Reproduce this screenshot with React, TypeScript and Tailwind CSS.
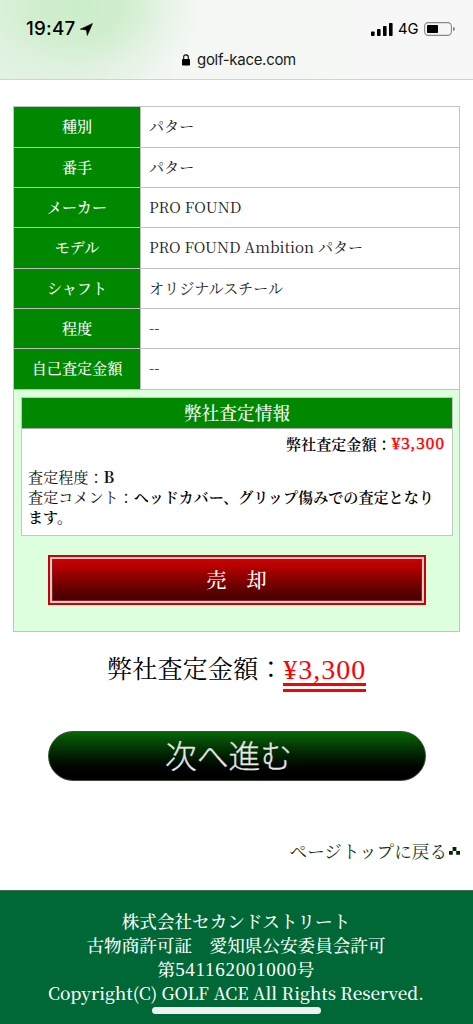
import React from "react";

const SERIF = "font-['Noto_Serif_CJK_JP','Liberation_Serif',serif]";

type Row = { label: string; value: React.ReactNode; height: string };

const rows: Row[] = [
  { label: "種別", value: "パター", height: "h-[41px]" },
  { label: "番手", value: "パター", height: "h-[40px]" },
  { label: "メーカー", value: <span className="tracking-[0.1px]">PRO FOUND</span>, height: "h-[40px]" },
  { label: "モデル", value: "PRO FOUND Ambition パター", height: "h-[41px]" },
  { label: "シャフト", value: "オリジナルスチール", height: "h-[40px]" },
  { label: "程度", value: "--", height: "h-[40px]" },
  { label: "自己査定金額", value: "--", height: "h-[41px]" },
];

function StatusBar() {
  return (
    <header className="h-[80px] shrink-0 border-b border-[#cdd3cd] bg-[radial-gradient(ellipse_125px_85px_at_78px_8px,#ccedca_0%,#d0eece_35%,#d8f0d766_72%,#d8f0d700_100%),linear-gradient(90deg,#e2f2e2_0px,#e6f2e6_90px,#f4f7f4_175px,#f7f7f7_473px)] font-['Inter','Noto_Sans',sans-serif] text-black">
      <div className="flex h-[46px] items-center pt-[12px] pl-[26px]">
        <span className="w-[50px] text-[18.8px] leading-[22px] font-medium tracking-[0.2px] whitespace-nowrap">19:47</span>
        <svg className="ml-[4px] h-[13px] w-[13px]" viewBox="0 0 13 13">
          <path d="M12.6 0.4 L7.3 12.6 L6.3 7 L0.2 6.2 Z" fill="#000" stroke="#000" strokeWidth="0.5" strokeLinejoin="round" />
        </svg>
        <svg className="ml-[278px] h-[13px] w-[22px]" viewBox="0 0 22 13">
          <rect x="0" y="8.5" width="3.6" height="4.5" rx="0.8" />
          <rect x="6" y="6" width="3.6" height="7" rx="0.8" />
          <rect x="12" y="3" width="3.6" height="10" rx="0.8" />
          <rect x="18" y="0" width="3.6" height="13" rx="0.8" />
        </svg>
        <span className="ml-[5px] w-[21px] text-[14.8px] leading-[20px] tracking-[-0.1px]">4G</span>
        <svg className="ml-[5px] h-[14px] w-[32px]" viewBox="0 0 32 14">
          <rect x="0.6" y="0.6" width="26.8" height="12.8" rx="3.8" fill="none" stroke="#888" strokeWidth="1.1" />
          <rect x="3" y="3" width="11" height="8" rx="0.8" />
          <path d="M29 4.8 Q31 5.4 31 7 Q31 8.6 29 9.2 Z" fill="#888" />
        </svg>
      </div>
      <div className="flex h-[28px] items-center pl-[182px]">
        <svg className="h-[12px] w-[8px]" viewBox="0 0 8 12">
          <path d="M1.7 5.5 V3.2 Q1.7 0.9 4 0.9 Q6.3 0.9 6.3 3.2 V5.5" fill="none" stroke="#000" strokeWidth="1.1" />
          <rect x="0" y="5" width="8" height="6.5" rx="0.9" />
        </svg>
        <span className="ml-[7px] text-[15px] leading-[20px] tracking-[-0.3px] text-[#1b1b1b]">golf-kace.com</span>
      </div>
    </header>
  );
}

function AppraisalBox() {
  return (
    <section className="ml-[7px] h-[139px] w-[432px] border border-[#c3c8c3] bg-white text-[#111]">
      <h2 className="flex h-[31px] items-center justify-center border-b border-[#aaa] bg-[#008800] pb-[1px] text-[17.7px] leading-[24px] font-medium text-white">
        弊社査定情報
      </h2>
      <p className="mt-[4px] mr-[7px] flex h-[22px] items-center justify-end font-semibold whitespace-nowrap text-black">
        弊社査定金額：
        <span className="font-['Liberation_Serif',serif] text-[17px] font-normal tracking-[1.1px] text-[#ff0000] [-webkit-text-stroke:0.4px_#ff0000]">
          ¥3,300
        </span>
      </p>
      <div className="mt-[12px] pl-[6px] leading-[20.2px] whitespace-nowrap">
        <p>
          査定程度：<b>B</b>
        </p>
        <p>
          査定コメント：<span className="font-semibold text-black">ヘッドカバー、グリップ傷みでの査定となり</span>
        </p>
        <p className="font-semibold text-black">ます。</p>
      </div>
    </section>
  );
}

export default function App() {
  return (
    <div className={`flex h-[1024px] w-[473px] flex-col overflow-hidden bg-white text-[15.1px] leading-[20px] text-[#222] ${SERIF}`}>
      <StatusBar />
      <main className="flex grow flex-col">
        <div className="mt-[26px] ml-[13px] h-[526px] w-[447px] border border-[#c3c3c3] bg-[#ddffdd]">
          {rows.map((row) => (
            <div key={row.label} className={`flex border-b border-[#bfbfbf] ${row.height}`}>
              <div className="flex w-[127px] items-center justify-center border-r border-[#bbb] bg-[#008800] pb-[2px] font-medium text-white">
                {row.label}
              </div>
              <div className="flex grow items-center bg-white pb-[2px] pl-[8px] whitespace-pre">
                <span>{row.value}</span>
              </div>
            </div>
          ))}
          <div className="h-[7px]" />
          <AppraisalBox />
          <button className="mt-[19px] ml-[34px] flex h-[50px] w-[378px] border-2 border-[#cc0000] bg-[#e8c8c8] p-[2px]">
            <span className="flex h-full grow items-center justify-center border border-[#882020] bg-linear-to-b from-[#cc0000] to-[#440000] pr-[1px] text-[20.2px] leading-[24px] font-medium whitespace-pre text-white">
              売　却
            </span>
          </button>
        </div>
        <p className="mt-[19px] ml-[107px] flex h-[41px] items-start text-[25.2px] leading-[33px] whitespace-nowrap text-black">
          弊社査定金額：
          <span className="h-[41px] border-b-[9px] border-double border-[#ff0000] font-['Liberation_Serif',serif] text-[28px] leading-[37px] tracking-[1px] text-[#ff0000]">
            ¥3,300
          </span>
        </p>
        <button className="mt-[39px] ml-[48px] h-[50px] w-[378px] rounded-full border border-[#39513a] bg-linear-to-b from-[#086608] to-black to-95% pr-[17px] pb-[4px] font-['Noto_Sans_CJK_JP',sans-serif] text-[31.8px] leading-[44px] font-light text-[#e4e9e4] [-webkit-text-stroke:0.3px_#e4e9e4]">
          次へ進む
        </button>
        <a className="mt-[57px] flex h-[26px] items-center justify-end pr-[13px] text-[17.6px] whitespace-nowrap text-[#123812]">
          ページトップに戻る
          <svg className="ml-[2px] h-[8px] w-[11px]" viewBox="0 0 11 8">
            <path d="M0 4h3.8v3.8H0zM3.6 0h3.8v4H3.6zM7.2 4H11v3.8H7.2z" fill="#002800" />
          </svg>
        </a>
      </main>
      <footer className="relative h-[134px] shrink-0 border-t border-[#426d51] bg-[#006837] pt-[18px] pr-[1px] text-center text-[17.6px] leading-[24px] font-medium whitespace-nowrap text-white">
        <p>株式会社セカンドストリート</p>
        <p>古物商許可証　愛知県公安委員会許可</p>
        <p className="h-[24px]">
          第
          <span className="font-['Liberation_Serif',serif] text-[19px] leading-none font-normal tracking-[0.7px]">541162001000</span>
          号
        </p>
        <p className="text-[17.25px]">Copyright(C) GOLF ACE All Rights Reserved.</p>
        <div className="absolute top-[116px] left-[152px] h-[7px] w-[169px] rounded-full bg-[#f0f0f0]" />
      </footer>
    </div>
  );
}
